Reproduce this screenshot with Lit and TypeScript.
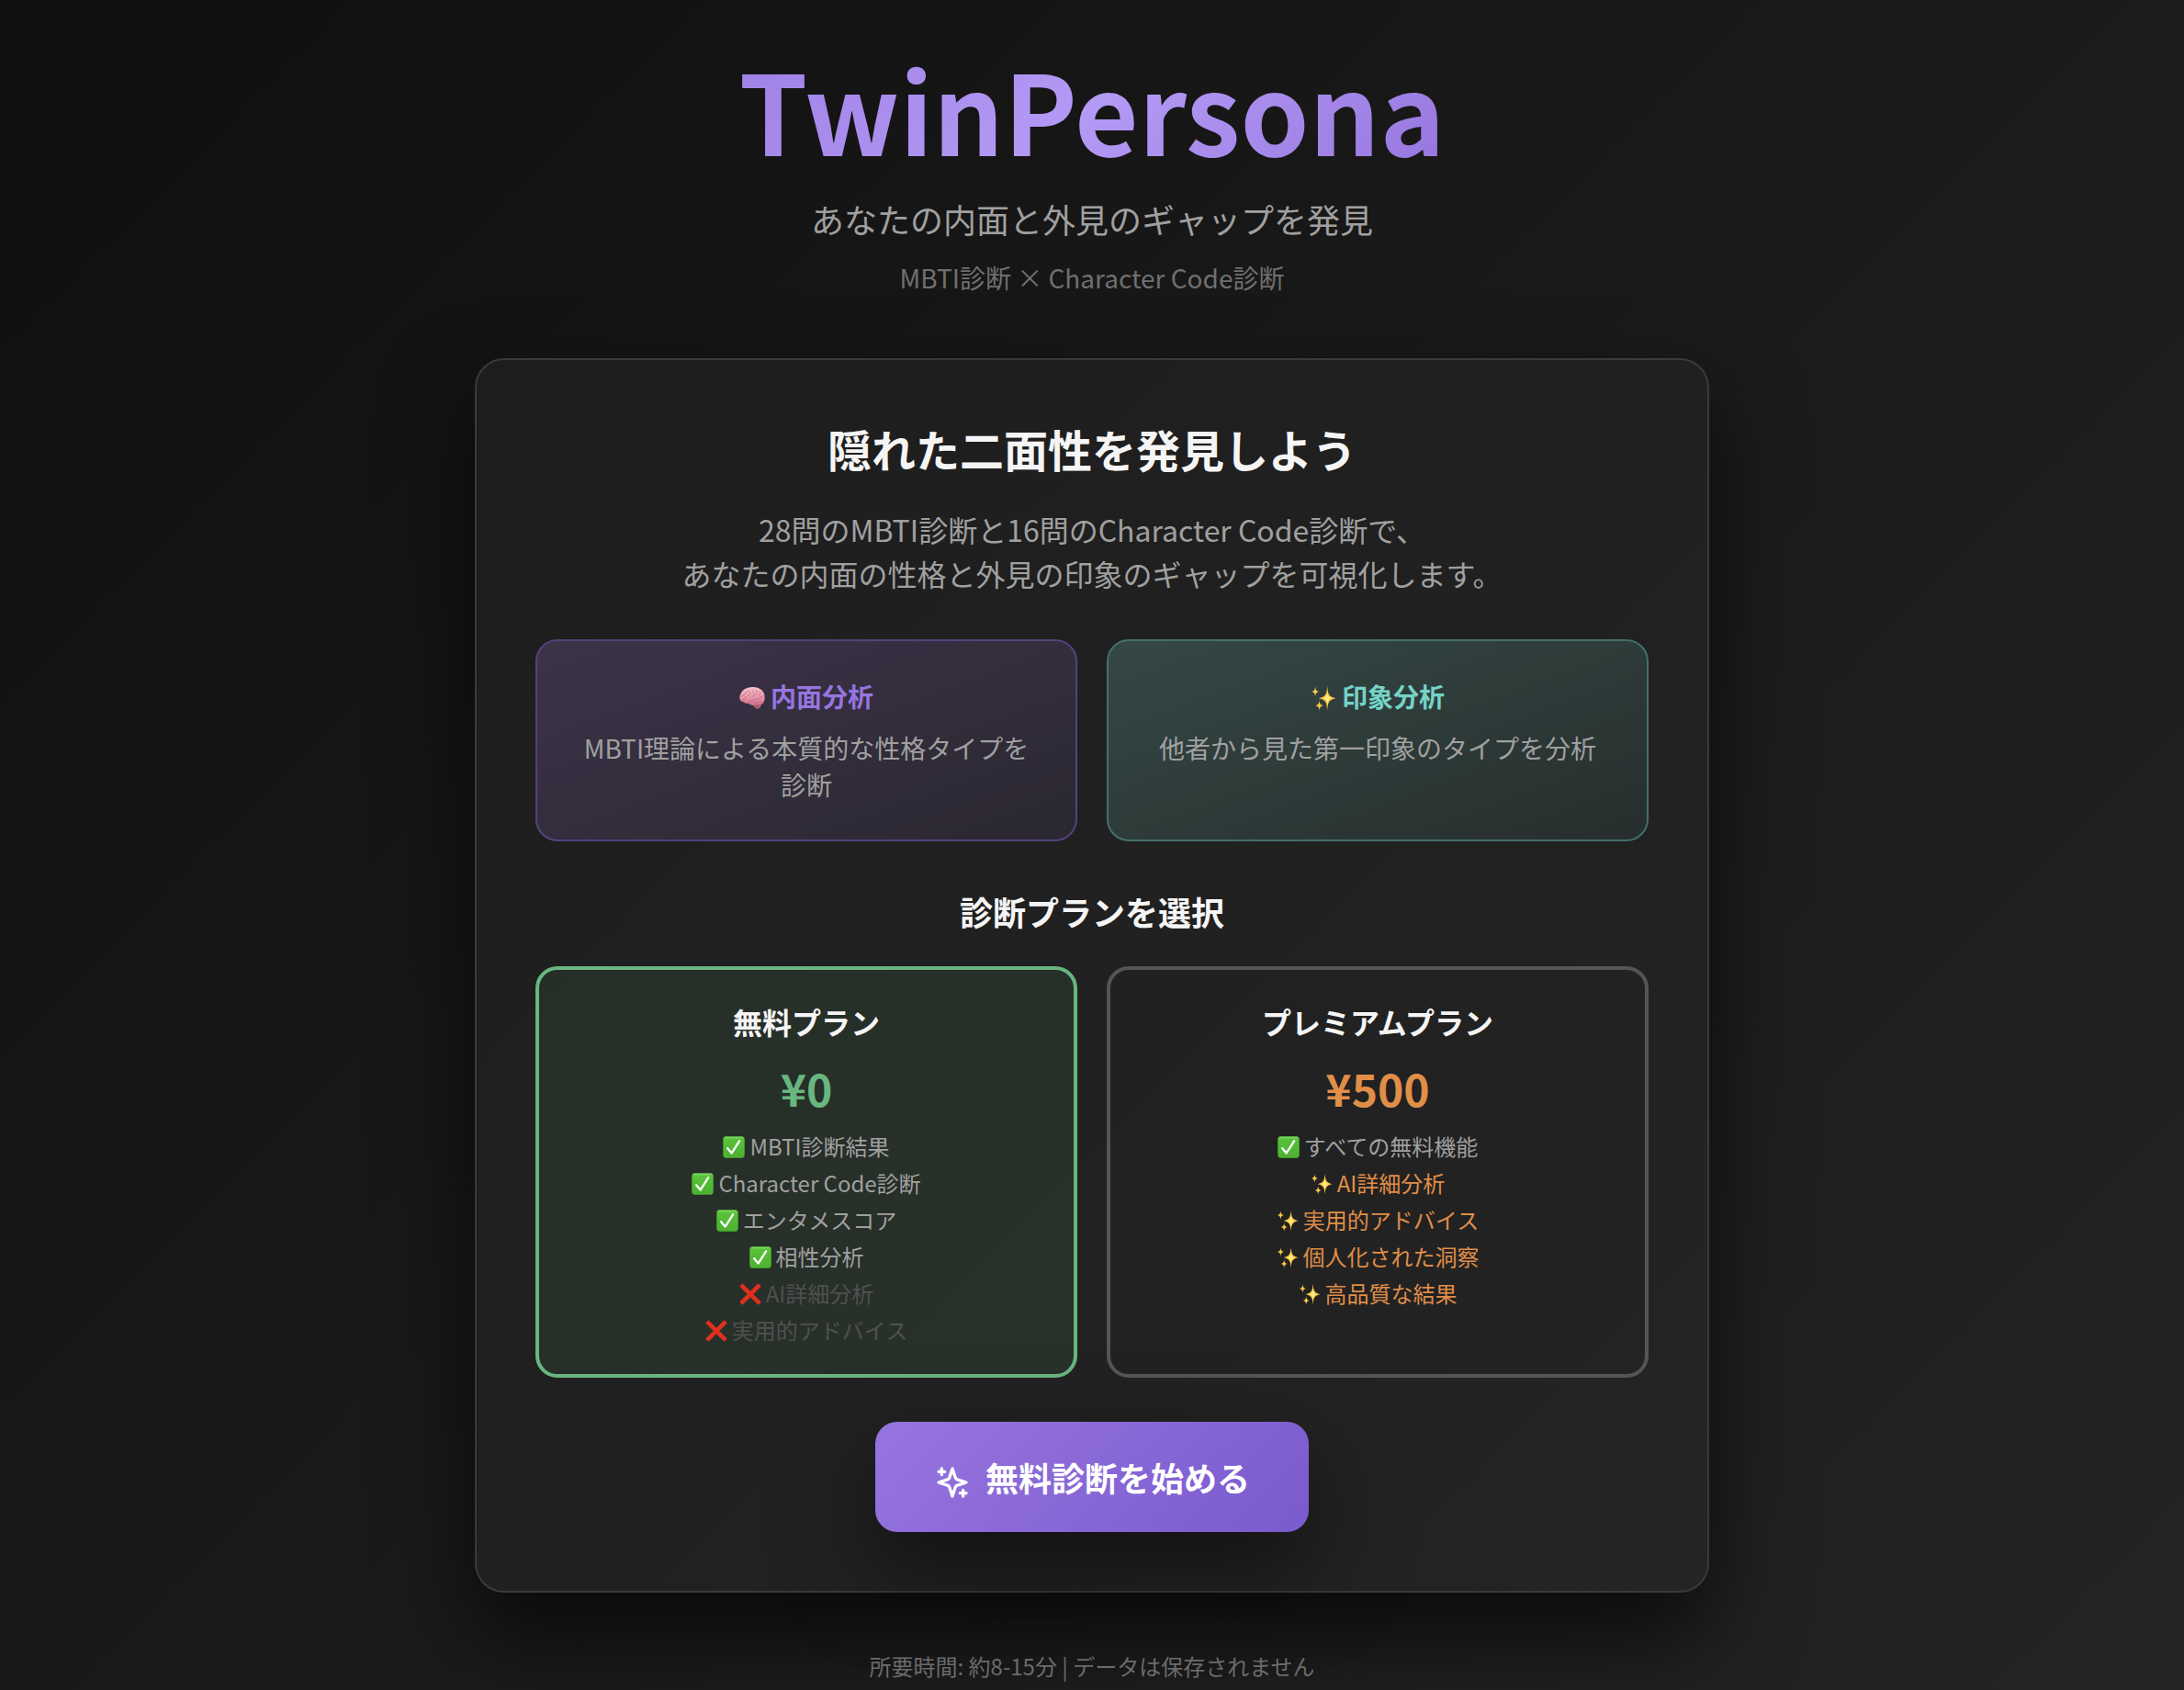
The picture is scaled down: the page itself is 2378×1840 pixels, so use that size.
import { LitElement, html, css, svg } from "lit";
import { customElement, state } from "lit/decorators.js";

type Mark = "check" | "cross" | "spark";
interface Feature { mark: Mark; text: string; }
interface Plan { id: string; name: string; price: string; features: Feature[]; }

const PLANS: Plan[] = [
  {
    id: "free", name: "無料プラン", price: "¥0",
    features: [
      { mark: "check", text: "MBTI診断結果" },
      { mark: "check", text: "Character Code診断" },
      { mark: "check", text: "エンタメスコア" },
      { mark: "check", text: "相性分析" },
      { mark: "cross", text: "AI詳細分析" },
      { mark: "cross", text: "実用的アドバイス" },
    ],
  },
  {
    id: "premium", name: "プレミアムプラン", price: "¥500",
    features: [
      { mark: "check", text: "すべての無料機能" },
      { mark: "spark", text: "AI詳細分析" },
      { mark: "spark", text: "実用的アドバイス" },
      { mark: "spark", text: "個人化された洞察" },
      { mark: "spark", text: "高品質な結果" },
    ],
  },
];

const checkMark = svg`
  <defs><linearGradient id="leaf" x1="0" y1="0" x2="0" y2="1">
    <stop offset="0" stop-color="#8ade70"/><stop offset="0.14" stop-color="#58c23a"/><stop offset="1" stop-color="#4db030"/>
  </linearGradient></defs>
  <rect x="0.3" y="0.3" width="23.4" height="23.4" rx="3.6" fill="url(#leaf)" stroke="#3f9b27" stroke-width="0.6"/>
  <path d="M5.2 13.2 9.6 18.6 18.2 5.2" fill="none" stroke="#fff" stroke-width="2.3" stroke-linecap="round" stroke-linejoin="round"/>`;
const crossMark = svg`
  <path d="M1.8 1.8 22.2 22.2M22.2 1.8 1.8 22.2" fill="none" stroke="#e0301e" stroke-width="4.6"/>`;
const sparkMark = svg`
  <path d="M15.6 0.6C16.2 8.6 17.2 10.8 23.6 12.2 17.2 13.6 16.2 15.8 15.6 23.6 15 15.8 14 13.6 7.6 12.2 14 10.8 15 8.6 15.6 0.6Z" fill="#f7c342"/>
  <path d="M15.6 6C16 10 17 11.4 19.8 12.2 17 13 16 14.4 15.6 18.4 15.2 14.4 14.2 13 11.4 12.2 14.2 11.4 15.2 10 15.6 6Z" fill="#ffeb80"/>
  <path d="M4.4 1C4.7 4.4 5.4 5.4 8 6 5.4 6.6 4.7 7.6 4.4 11 4.1 7.6 3.4 6.6 0.8 6 3.4 5.4 4.1 4.4 4.4 1Z" fill="#f9c846"/>
  <path d="M8.2 14C8.5 17.4 9.2 18.4 11.8 19 9.2 19.6 8.5 20.6 8.2 24 7.9 20.6 7.2 19.6 4.6 19 7.2 18.4 7.9 17.4 8.2 14Z" fill="#f9c846"/>`;
const brainMark = svg`
  <defs><linearGradient id="lobe" x1="0" y1="0" x2="0" y2="1">
    <stop offset="0" stop-color="#f8c3cd"/><stop offset="0.5" stop-color="#eb9cb0"/><stop offset="1" stop-color="#cf6f8c"/>
  </linearGradient></defs>
  <path d="M12.6 18C14 16.8 18.4 16.8 20.4 18 20.4 20.6 18.4 22.2 16.6 22 14.8 21.8 13.2 20 12.6 18Z" fill="#a5626a"/>
  <path d="M0.4 12.4C0 8 3.4 3.6 8 2.4 12 1 18 1.8 20.8 4.6 23.4 7 24.2 10.6 23.5 13.6 23 16.8 21.2 18.6 18.8 18.4 16.8 17.6 14.8 18.2 13 18.8 11.2 18.8 9.4 18 8.4 17 6.4 17.2 5 16.8 4 15.6 2 15.4 0.6 14.4 0.4 12.4Z" fill="url(#lobe)"/>
  <g fill="none" stroke="#c7647f" stroke-width="0.7" stroke-linecap="round">
    <path d="M2.4 10.4C3.8 8.4 5.6 9.2 6 7.2 6.4 5.6 7.8 5 9.2 5.4"/>
    <path d="M3.4 13.4C5.2 13.6 6.2 12.4 6 10.8M8 9.6C9.4 9.8 10.4 8.6 10 7.2"/>
    <path d="M8.4 16C10 14.2 12.4 15 14.2 13.6 16 12.2 18 13.2 19.6 12"/>
    <path d="M12 4.2C13.4 4.8 13.6 6.4 12.8 7.6M15.6 4.2C17 5.2 17 6.8 15.8 8 14.4 9.2 13 9.2 12.2 10.6"/>
    <path d="M19.4 5.6C20.4 7.2 19.6 8.8 18.2 9.4M22.4 9.8C21.6 11 20.8 11.2 19.8 10.8M14.6 16C16.8 16.4 19 15.8 21.4 15.6"/>
  </g>`;

const MARKS = { check: checkMark, cross: crossMark, spark: sparkMark };

@customElement("app-root")
export class AppRoot extends LitElement {
  @state() private selected = "free";

  static styles = css`
    :host {
      display: block;
      box-sizing: border-box;
      min-height: 100vh;
      padding: 58px 32px 10px;
      background: linear-gradient(135deg, #0f0f0f 0%, #1a1a1a 50%, #242424 100%);
      color: #a0a0a0;
      font-family: "Noto Sans CJK JP", sans-serif;
      text-align: center;
    }
    h1, h2, h3, p { margin: 0; padding: 0; }
    .page { max-width: 1344px; margin: 0 auto; }
    .brand {
      margin-bottom: 30px;
      background: linear-gradient(135deg, #9370db 0%, #b49af5 50%, #8560d0 100%);
      -webkit-background-clip: text;
      background-clip: text;
      color: transparent;
      font-size: 120px;
      line-height: 120px;
      font-weight: 700;
    }
    .tagline { font-size: 36px; line-height: 60px; margin-bottom: 10px; }
    .sub { font-size: 28px; line-height: 48px; color: #707070; margin-bottom: 64px; }
    .card {
      padding: 64px;
      border: 2px solid #3a3a3a;
      border-radius: 32px;
      background: linear-gradient(135deg, #1d1d1d, #242424);
      box-shadow: 0 50px 100px rgba(0, 0, 0, 0.65);
    }
    h2 { font-size: 48px; line-height: 64px; color: #f5f5f5; margin-bottom: 32px; }
    .lead { font-size: 32px; line-height: 48px; margin-bottom: 48px; }
    .pair { display: grid; grid-template-columns: 1fr 1fr; gap: 32px; margin-bottom: 48px; }
    .info {
      padding: 40px;
      border: 2px solid;
      border-radius: 24px;
      font-size: 28px;
      line-height: 40px;
    }
    .info h3 { font-size: 28px; line-height: 40px; margin-bottom: 16px; }
    .inner { border-color: #53437a; background: linear-gradient(to bottom right, #3d3349, #2a2731); }
    .inner h3 { color: #9775e0; }
    .outer { border-color: #43706c; background: linear-gradient(to bottom right, #344845, #272e2d); }
    .outer h3 { color: #76d3c8; }
    .mark { width: 24px; height: 24px; margin-right: 5px; vertical-align: -3px; }
    .info .mark { width: 28px; height: 28px; margin-right: 6px; vertical-align: -4px; }
    .choose { font-size: 36px; line-height: 56px; color: #f5f5f5; margin-bottom: 32px; }
    .plan {
      display: flex;
      flex-direction: column;
      align-items: center;
      gap: 16px;
      padding: 32px;
      border: 4px solid #555;
      border-radius: 24px;
      background: none;
      color: inherit;
      font: inherit;
      cursor: pointer;
    }
    .plan.selected { border-color: #68b680; background: rgba(104, 184, 128, 0.1); }
    .name { font-size: 32px; line-height: 48px; font-weight: 700; color: #f5f5f5; }
    .price { font-size: 48px; line-height: 64px; font-weight: 700; }
    .free .price { color: #68b680; }
    .premium .price, .spark { color: #e08e48; }
    .features { display: flex; flex-direction: column; gap: 8px; font-size: 24px; line-height: 32px; }
    .cross { color: #505050; }
    .start {
      padding: 32px 64px;
      border: 0;
      border-radius: 24px;
      background: linear-gradient(135deg, #9775e0, #7a5acd);
      box-shadow: 0 40px 100px rgba(0, 0, 0, 0.5);
      color: #fff;
      font-family: inherit;
      font-size: 36px;
      line-height: 56px;
      font-weight: 700;
      cursor: pointer;
    }
    .start svg { width: 40px; height: 40px; margin-right: 16px; vertical-align: middle; }
    .note { position: relative; margin-top: 64px; font-size: 24px; line-height: 32px; color: #6b6b6b; }
  `;

  private renderPlan(plan: Plan) {
    const on = this.selected === plan.id;
    return html`
      <button type="button" class="plan ${plan.id} ${on ? "selected" : ""}" aria-pressed=${on ? "true" : "false"}
        @click=${() => { this.selected = plan.id; }}>
        <span class="name">${plan.name}</span>
        <span class="price">${plan.price}</span>
        <span class="features">
          ${plan.features.map((f) => html`<span class="${f.mark}"><svg class="mark" viewBox="0 0 24 24" aria-hidden="true">${MARKS[f.mark]}</svg>${f.text}</span>`)}
        </span>
      </button>`;
  }

  render() {
    return html`
      <main class="page">
        <header>
          <h1 class="brand">TwinPersona</h1>
          <p class="tagline">あなたの内面と外見のギャップを発見</p>
          <p class="sub">MBTI診断 × Character Code診断</p>
        </header>
        <section class="card">
          <h2>隠れた二面性を発見しよう</h2>
          <p class="lead">28問のMBTI診断と16問のCharacter Code診断で、<br>あなたの内面の性格と外見の印象のギャップを可視化します。</p>
          <div class="pair">
            <article class="info inner">
              <h3><svg class="mark" viewBox="0 0 24 24" aria-hidden="true">${brainMark}</svg>内面分析</h3>
              <p>MBTI理論による本質的な性格タイプを診断</p>
            </article>
            <article class="info outer">
              <h3><svg class="mark" viewBox="0 0 24 24" aria-hidden="true">${sparkMark}</svg>印象分析</h3>
              <p>他者から見た第一印象のタイプを分析</p>
            </article>
          </div>
          <h3 class="choose">診断プランを選択</h3>
          <div class="pair">${PLANS.map((p) => this.renderPlan(p))}</div>
          <button type="button" class="start"><svg viewBox="0 0 24 24" fill="none" stroke="currentColor" stroke-width="2" stroke-linecap="round" stroke-linejoin="round" aria-hidden="true"><path d="m12 3-1.912 5.813a2 2 0 0 1-1.275 1.275L3 12l5.813 1.912a2 2 0 0 1 1.275 1.275L12 21l1.912-5.813a2 2 0 0 1 1.275-1.275L21 12l-5.813-1.912a2 2 0 0 1-1.275-1.275L12 3Z"/><path d="M5 3v4M19 17v4M3 5h4M17 19h4"/></svg>無料診断を始める</button>
        </section>
        <p class="note">所要時間: 約8-15分 | データは保存されません</p>
      </main>`;
  }
}
